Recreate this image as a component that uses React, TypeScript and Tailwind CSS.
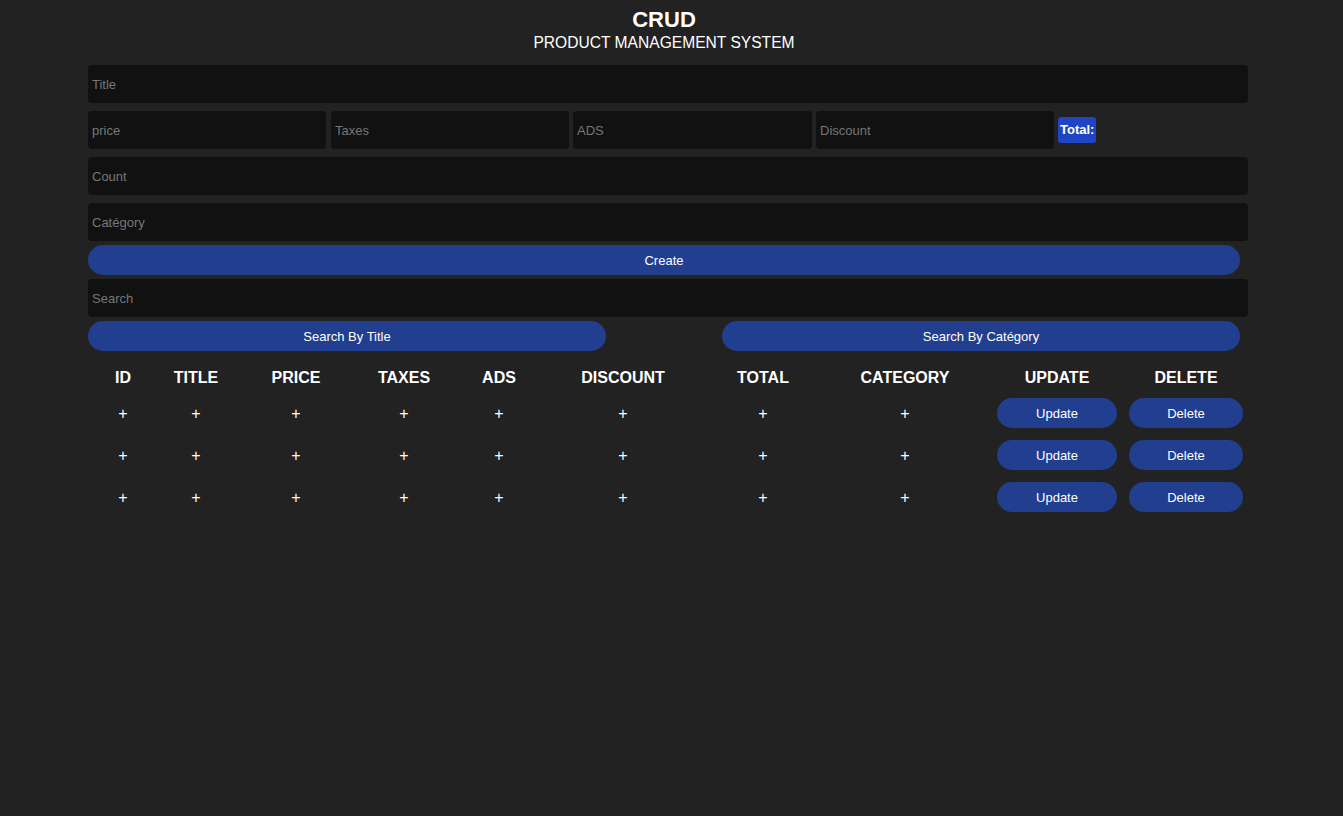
import React from 'react';

const cols = ['ID', 'TITLE', 'PRICE', 'TAXES', 'ADS', 'DISCOUNT', 'TOTAL', 'CATEGORY', 'UPDATE', 'DELETE'];
const grid = 'grid grid-cols-[58px_88px_112px_104px_86px_162px_118px_166px_138px_120px] ml-[6px]';
const btn = 'h-[30px] rounded-full bg-[#213e8f] pt-px text-[13px]';

const Field = ({ placeholder, className = '' }: { placeholder: string; className?: string }) => (
    <input
        placeholder={placeholder}
        className={`h-[38px] rounded-[4px] bg-[#111111] px-1 text-[13px] text-white placeholder:text-[#777777] outline-none ${className}`}
    />
);

export default function App() {
    return (
        <div className="min-h-[816px] bg-[#222222] text-white font-['Liberation_Sans',Arial,sans-serif]">
            <div className="w-[1328px] pt-[7px] text-center">
                <h2 className="text-[22px] font-bold leading-[26px]">CRUD</h2>
                <p className="text-[15.6px] leading-[20px]">PRODUCT MANAGEMENT SYSTEM</p>
            </div>

            <div className="ml-[88px] mt-[12px] w-[1160px]">
                <div className="flex flex-col gap-2">
                    <Field placeholder="Title" className="w-full" />
                    <div className="flex items-center gap-[4px]">
                        <Field placeholder="price" className="w-[238px]" />
                        <Field placeholder="Taxes" className="ml-px w-[238px]" />
                        <Field placeholder="ADS" className="w-[239px]" />
                        <Field placeholder="Discount" className="w-[238px]" />
                        <span className="rounded-[3px] bg-[#1f44c4] px-[2px] py-[4px] text-[13px] font-bold leading-[18px]">Total:</span>
                    </div>
                    <Field placeholder="Count" className="w-full" />
                    <Field placeholder="Catégory" className="w-full" />
                </div>

                <button className={`${btn} mt-[4px] w-[1152px]`}>Create</button>
                <Field placeholder="Search" className="mt-[4px] block w-full" />
                <div className="mt-[4px] flex w-[1152px] justify-between">
                    <button className={`${btn} w-[518px]`}>Search By Title</button>
                    <button className={`${btn} w-[518px]`}>Search By Catégory</button>
                </div>

                <div className="mt-[12px]">
                    <div className={`${grid} h-[29px] items-center text-center text-[16px] font-bold`}>
                        {cols.map(c => <div key={c}>{c}</div>)}
                    </div>
                    {[0, 1, 2].map(r => (
                        <div key={r} className={`${grid} h-[42px] items-center text-center text-[16px]`}>
                            {cols.slice(0, 8).map(c => <div key={c} className="pt-[2px]">+</div>)}
                            <div className="flex justify-center">
                                <button className={`${btn} w-[120px]`}>Update</button>
                            </div>
                            <div className="flex justify-center">
                                <button className={`${btn} w-[114px]`}>Delete</button>
                            </div>
                        </div>
                    ))}
                </div>
            </div>
        </div>
    );
}
